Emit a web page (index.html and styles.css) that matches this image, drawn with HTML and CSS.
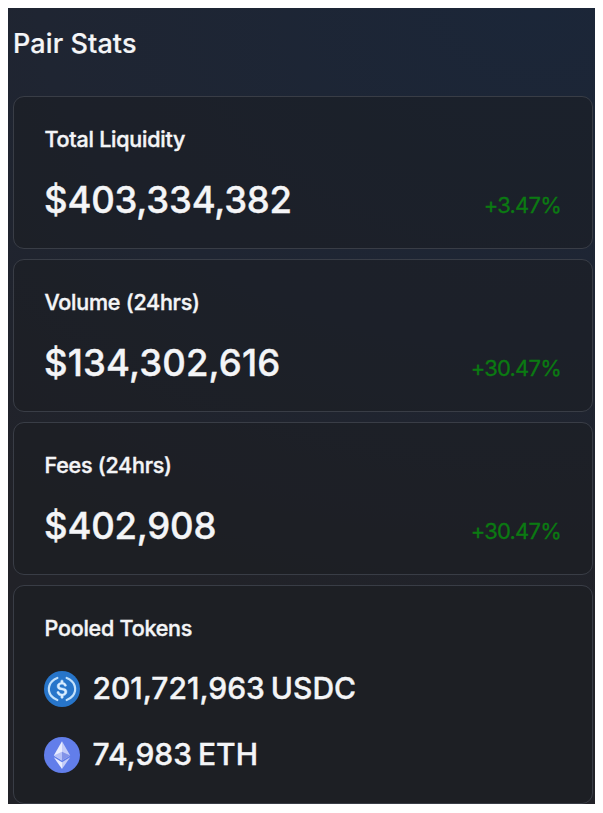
FILE: index.html
```html
<!DOCTYPE html>
<html lang="en">
<head>
<meta charset="utf-8">
<title>Pair Stats</title>
<link rel="stylesheet" href="styles.css">
</head>
<body>
<main class="panel">
  <h1 class="title">Pair Stats</h1>
  <div class="cards">
    <section class="card">
      <h2 class="label">Total Liquidity</h2>
      <div class="row"><span class="value">$403,334,382</span><span class="change">+3.47%</span></div>
    </section>
    <section class="card">
      <h2 class="label">Volume (24hrs)</h2>
      <div class="row"><span class="value value-volume">$134,302,616</span><span class="change">+30.47%</span></div>
    </section>
    <section class="card">
      <h2 class="label">Fees (24hrs)</h2>
      <div class="row"><span class="value">$402,908</span><span class="change">+30.47%</span></div>
    </section>
    <section class="card card-tokens">
      <h2 class="label">Pooled Tokens</h2>
      <div class="token">
        <svg class="icon" viewBox="0 0 2000 2000" aria-hidden="true">
          <circle cx="1000" cy="1000" r="1000" fill="#2775ca"/>
          <path fill="#d9edff" stroke="#d9edff" stroke-width="24" d="M1275 1158.33c0-145.83-87.500-195.83-262.500-216.660-125-16.670-150-50-150-108.340s41.670-95.830 125-95.830c75 0 116.670 25 137.500 87.500 4.170 12.500 16.670 20.830 29.170 20.830h66.660c16.670 0 29.170-12.500 29.170-29.160v-4.170c-16.670-91.670-91.670-162.500-187.500-170.830v-100c0-16.670-12.500-29.170-33.330-33.340h-62.500c-16.670 0-29.170 12.500-33.340 33.340v95.830c-125 16.670-204.160 100-204.160 204.170 0 137.500 83.330 191.660 258.330 212.500 116.670 20.830 154.170 45.830 154.170 112.500s-58.340 112.500-137.500 112.500c-108.340 0-145.840-45.840-158.340-108.340-4.160-16.660-16.660-25-29.160-25h-70.840c-16.660 0-29.160 12.500-29.160 29.170v4.170c16.660 104.160 83.330 179.160 220.830 200v100c0 16.660 12.500 29.160 33.330 33.330h62.500c16.670 0 29.170-12.500 33.340-33.330v-100c125-20.840 208.330-108.340 208.330-220.840z"/>
          <path fill="none" stroke="#c3e1fb" stroke-width="125" stroke-linecap="round" d="M740 390C260 570 150 1050 400 1380Q540 1550 740 1610M1260 390C1740 570 1850 1050 1600 1380Q1460 1550 1260 1610"/>
        </svg>
        <span class="amount">201,721,963 USDC</span>
      </div>
      <div class="token">
        <svg class="icon" viewBox="0 0 36 36" aria-hidden="true">
          <circle cx="18" cy="18" r="18" fill="#627eea"/>
          <path fill="#e9edff" d="M18 4.300 9.800 18.500 18 23.500z"/>
          <path fill="#c5cdf8" d="M18 4.300 26.200 18.500 18 23.500z"/>
          <path fill="#b6c1f7" d="M9.800 18.500 18 14.700V23.500z"/>
          <path fill="#8293e8" d="M26.200 18.500 18 14.700V23.500z"/>
          <path fill="#e9edff" d="M9.800 20.300 18 32V25.300z"/>
          <path fill="#c5cdf8" d="M26.200 20.300 18 32V25.300z"/>
        </svg>
        <span class="amount">74,983 ETH</span>
      </div>
    </section>
  </div>
</main>
</body>
</html>
```
FILE: styles.css
```css
* { box-sizing: border-box; }
body {
  margin: 8px;
  background: #fff;
  color: #f4f5f7;
  font-family: Inter, "Liberation Sans", sans-serif;
}
.panel {
  width: 587px;
  height: 796px;
  padding: 20px 2px 0 5px;
  overflow: hidden;
  background: radial-gradient(ellipse 900px 620px at 90% 0, #1b2638 0, #1f2532 55%, #212228 100%);
}
.title {
  margin: 0 0 36px;
  font-size: 27px;
  font-weight: 500;
  line-height: 32px;
  letter-spacing: 0.1px;
  -webkit-text-stroke: 0.2px;
}
.cards {
  display: flex;
  flex-direction: column;
  gap: 10px;
}
.card {
  height: 153px;
  padding: 28px 31px 0 30px;
  border: 1px solid #393d46;
  border-radius: 11px;
  background: rgba(25, 27, 31, 0.5);
}
.card-tokens { height: 219px; }
.label {
  margin: 0 0 0 0.5px;
  font-size: 21.5px;
  font-weight: 500;
  line-height: 28px;
  letter-spacing: -0.24px;
  -webkit-text-stroke: 0.4px;
}
.row {
  display: flex;
  align-items: baseline;
  justify-content: space-between;
  margin-top: 23px;
}
.value {
  font-size: 36.5px;
  font-weight: 500;
  line-height: 48px;
  letter-spacing: -0.2px;
  -webkit-text-stroke: 0.4px;
}
.value-volume { letter-spacing: 0.15px; }
.change {
  color: #0b7a12;
  font-size: 22px;
  letter-spacing: -0.8px;
  -webkit-text-stroke: 0.3px;
}
.token {
  display: flex;
  align-items: center;
  gap: 12.5px;
  height: 36px;
  margin-top: 30px;
}
.label + .token { margin-top: 29px; }
.icon { width: 36px; height: 36px; }
.amount {
  margin-top: -2px;
  font-size: 30px;
  font-weight: 500;
  line-height: 36px;
  letter-spacing: 0;
  word-spacing: -2px;
  -webkit-text-stroke: 0.4px;
}
```
